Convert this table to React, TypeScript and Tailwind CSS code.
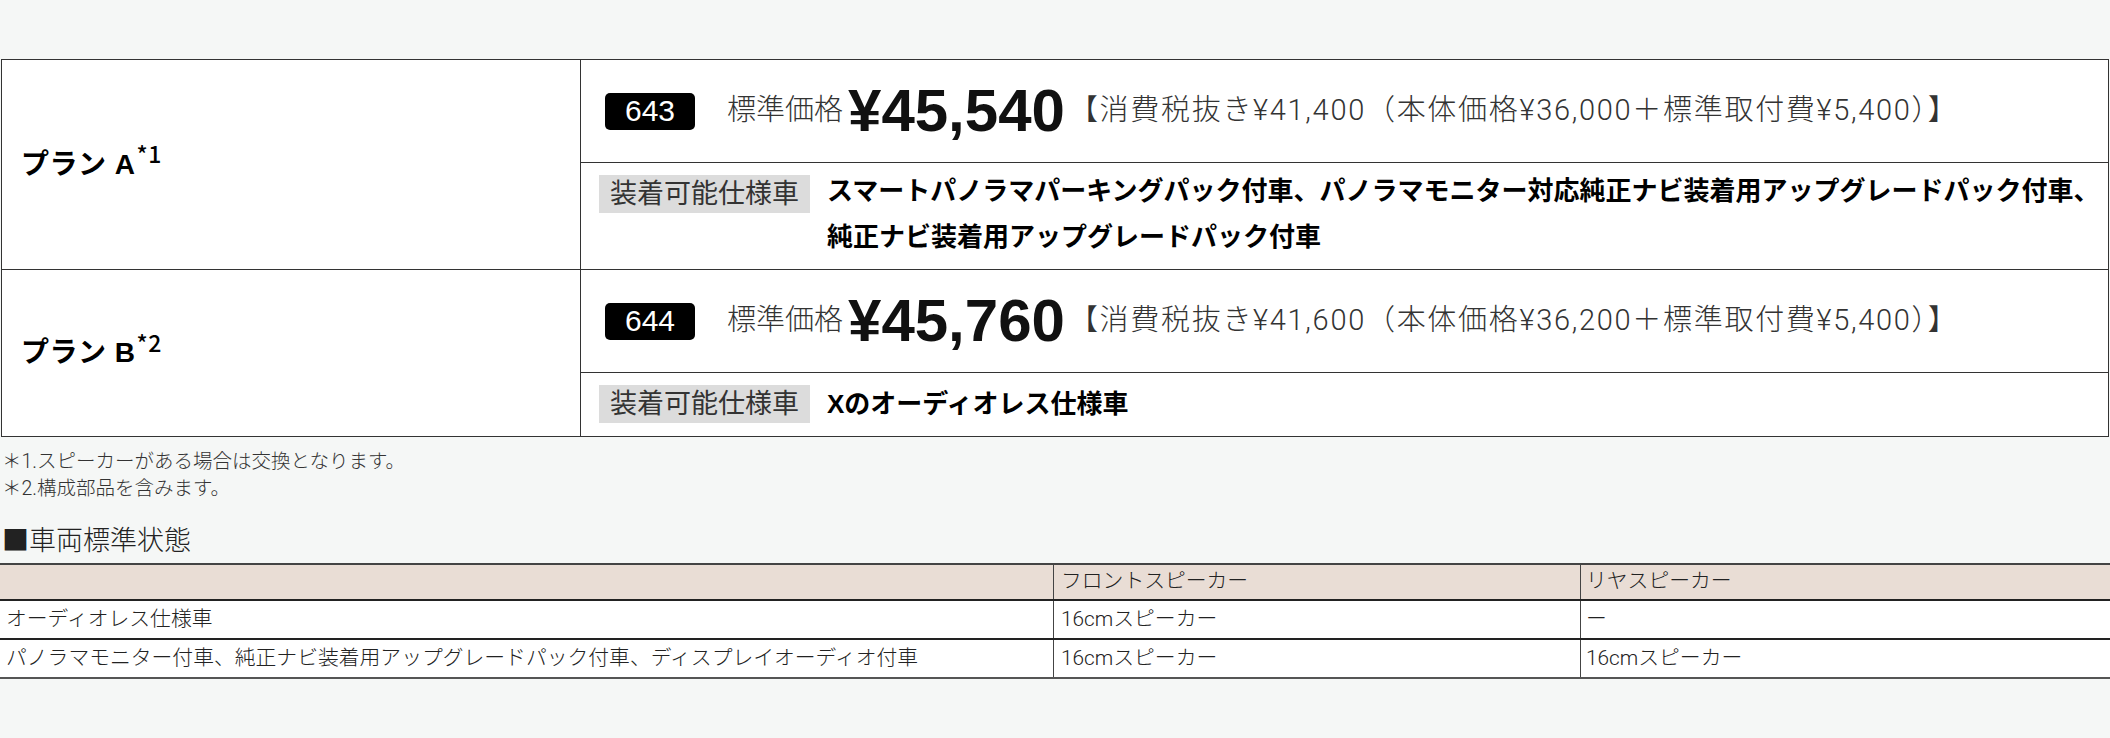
const FONT = "font-['Liberation_Sans','Noto_Sans_CJK_JP',sans-serif]"
const LIGHT = "font-['Roboto','Noto_Sans_CJK_JP',sans-serif] font-light"

type Plan = {
  name: string
  note: string
  code: string
  price: string
  detail: string
  specs: string[]
}

const PLANS: Plan[] = [
  {
    name: 'プラン A',
    note: '*1',
    code: '643',
    price: '¥45,540',
    detail: '【消費税抜き¥41,400（本体価格¥36,000＋標準取付費¥5,400）】',
    specs: [
      'スマートパノラマパーキングパック付車、パノラマモニター対応純正ナビ装着用アップグレードパック付車、',
      '純正ナビ装着用アップグレードパック付車',
    ],
  },
  {
    name: 'プラン B',
    note: '*2',
    code: '644',
    price: '¥45,760',
    detail: '【消費税抜き¥41,600（本体価格¥36,200＋標準取付費¥5,400）】',
    specs: ['Xのオーディオレス仕様車'],
  },
]

const SPEAKERS = [
  { car: 'オーディオレス仕様車', front: '16cmスピーカー', rear: 'ー' },
  {
    car: 'パノラマモニター付車、純正ナビ装着用アップグレードパック付車、ディスプレイオーディオ付車',
    front: '16cmスピーカー',
    rear: '16cmスピーカー',
  },
]

function PlanRow({ plan, last }: { plan: Plan; last: boolean }) {
  return (
    <div className={`flex ${last ? '' : 'border-b border-[#333]'}`}>
      {/* plan name */}
      <div className="w-[579px] shrink-0 border-r border-[#333] flex items-center pl-[19px]">
        <span className="text-[28px] font-bold text-black tracking-[0.5px]">
          {plan.name}
          <sup className="text-[23px] font-medium ml-px top-[-0.45em] font-['Noto_Sans_CJK_JP',sans-serif]">
            {plan.note}
          </sup>
        </span>
      </div>

      <div className="flex-1 flex flex-col">
        {/* price */}
        <div className="h-[103px] border-b border-[#333] flex items-center pl-[24px]">
          <span className="w-[90px] h-[37px] rounded-[5px] bg-black text-white text-[30px] leading-none flex items-center justify-center">
            {plan.code}
          </span>
          <span className={`ml-[32px] text-[29px] text-[#333] ${LIGHT}`}>標準価格</span>
          <span className="ml-[5px] text-[60px] font-bold text-[#111] leading-none">{plan.price}</span>
          <span className={`ml-[4px] text-[29px] text-[#333] tracking-[1.7px] ${LIGHT}`}>{plan.detail}</span>
        </div>

        {/* available vehicles */}
        <div className="flex items-start pl-[18px] pt-[5px] pb-[9px]">
          <span className="mt-[7px] h-[38px] px-[11px] bg-[#dcdcdc] text-[27px] text-[#333] leading-[38px] shrink-0">
            装着可能仕様車
          </span>
          <div className={`ml-[17px] text-[26px] font-bold text-black leading-[46px] ${plan.specs.length === 1 ? 'pt-[3px]' : ''}`}>
            {plan.specs.map(s => (
              <div key={s} className="whitespace-nowrap">{s}</div>
            ))}
          </div>
        </div>
      </div>
    </div>
  )
}

export default function App() {
  return (
    <div className={`w-[2110px] h-[738px] bg-[#f5f7f6] pt-[59px] ${FONT}`}>
      {/* option price table */}
      <div className="ml-px w-[2108px] border border-[#333] bg-white">
        {PLANS.map((p, i) => (
          <PlanRow key={p.code} plan={p} last={i === PLANS.length - 1} />
        ))}
      </div>

      {/* notes */}
      <div className={`mt-[11px] pl-[2px] text-[19.5px] text-[#333] leading-[27px] ${LIGHT}`}>
        <p>＊1.スピーカーがある場合は交換となります。</p>
        <p>＊2.構成部品を含みます。</p>
      </div>

      <h2 className="mt-[19px] pl-[2px] text-[27px] font-light text-[#222] leading-[36px] font-['Noto_Sans_CJK_JP',sans-serif]">
        ■車両標準状態
      </h2>

      {/* speaker table */}
      <div className={`mt-[6px] border-t-2 border-b-2 border-t-[#444] border-b-[#555] text-[20.8px] text-[#222] ${LIGHT}`}>
        <div className="flex h-[36px] bg-[#e9ddd5] border-b-2 border-[#222]">
          <div className="w-[1054px] border-r border-[#444]" />
          <div className="w-[527px] border-r border-[#444] flex items-center pl-[7px]">フロントスピーカー</div>
          <div className="flex-1 flex items-center pl-[5px]">リヤスピーカー</div>
        </div>
        {SPEAKERS.map((r, i) => (
          <div
            key={r.car}
            className={`flex bg-white ${i === 0 ? 'h-[39px] border-b-2 border-[#222]' : 'h-[37px]'}`}
          >
            <div className="w-[1054px] border-r border-[#444] flex items-center pl-[6px]">{r.car}</div>
            <div className="w-[527px] border-r border-[#444] flex items-center pl-[7px]">{r.front}</div>
            <div className="flex-1 flex items-center pl-[5px]">{r.rear}</div>
          </div>
        ))}
      </div>
    </div>
  )
}
